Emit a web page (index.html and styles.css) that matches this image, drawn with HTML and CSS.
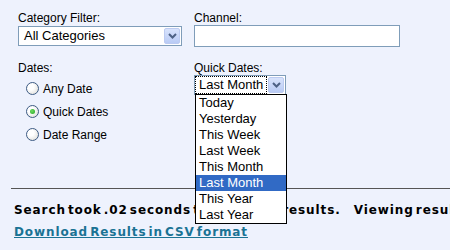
FILE: index.html
```html
<!DOCTYPE html>
<html lang="en">
<head>
    <meta charset="UTF-8">
    <meta name="viewport" content="width=device-width, initial-scale=1.0">
    <title>Search Results</title>
    <link rel="stylesheet" href="styles.css">
</head>
<body>
    <div class="page">
        <div class="filters">
            <div class="field">
                <label class="field-label">Category Filter:</label>
                <div class="xp-select category-select">
                    <span class="xp-value">All Categories</span>
                    <span class="xp-arrow">
                        <svg width="9" height="6" viewBox="0 0 9 6"><path d="M1 1 L4.5 4.5 L8 1" fill="none" stroke="#4d6185" stroke-width="2"/></svg>
                    </span>
                </div>
            </div>

            <div class="field">
                <label class="field-label">Channel:</label>
                <div class="xp-input"></div>
            </div>

            <div class="field">
                <label class="field-label">Dates:</label>
                <ul class="radio-list">
                    <li class="radio-row">
                        <span class="radio"></span>
                        <span>Any Date</span>
                    </li>
                    <li class="radio-row">
                        <span class="radio checked"></span>
                        <span>Quick Dates</span>
                    </li>
                    <li class="radio-row">
                        <span class="radio"></span>
                        <span>Date Range</span>
                    </li>
                </ul>
            </div>

            <div class="field">
                <label class="field-label">Quick Dates:</label>
                <div class="dropdown-wrap">
                    <div class="xp-select quick-select">
                        <span class="xp-value focused">Last Month</span>
                        <span class="xp-arrow">
                            <svg width="9" height="6" viewBox="0 0 9 6"><path d="M1 1 L4.5 4.5 L8 1" fill="none" stroke="#4d6185" stroke-width="2"/></svg>
                        </span>
                    </div>
                    <ul class="dropdown-list">
                        <li>Today</li>
                        <li>Yesterday</li>
                        <li>This Week</li>
                        <li>Last Week</li>
                        <li>This Month</li>
                        <li class="selected">Last Month</li>
                        <li>This Year</li>
                        <li>Last Year</li>
                    </ul>
                </div>
            </div>
        </div>

        <hr class="divider">

        <p class="search-info">Search took .02 seconds to find 1148 results. <span class="viewing">Viewing results 1 - 20</span></p>
        <a class="csv-link" href="#">Download Results in CSV format</a>
    </div>
</body>
</html>
```

FILE: styles.css
```css
* {
    margin: 0;
    padding: 0;
    box-sizing: border-box;
}

html, body {
    overflow: hidden;
}

body {
    font-family: 'Liberation Sans', Arial, sans-serif;
    font-size: 12px;
    background: #eef2fd;
    color: #000;
}

.page {
    padding: 11px 0 0 11px;
}

.filters {
    display: grid;
    grid-template-columns: 176px 206px;
    row-gap: 14px;
    padding-left: 7px;
}

.field-label {
    display: block;
    line-height: 14px;
    height: 14px;
}

/* XP style select box */
.xp-select {
    display: flex;
    align-items: center;
    height: 20px;
    background: #fff;
    border: 1px solid #7f9db9;
    padding: 1px;
    font-size: 13px;
}

.category-select {
    width: 164px;
    margin-top: 1px;
}

.quick-select {
    width: 92px;
}

.xp-value {
    flex: 1;
    line-height: 16px;
    padding-left: 4px;
    white-space: nowrap;
}

.xp-value.focused {
    outline: 1px dotted #000;
    outline-offset: 0;
    padding-left: 3px;
    margin-right: 2px;
}

.xp-arrow {
    width: 16px;
    height: 16px;
    display: flex;
    align-items: center;
    justify-content: center;
    border: 1px solid #bccbf1;
    border-radius: 2px;
    background: linear-gradient(#d8e3fc, #b9cbf5);
}

.xp-input {
    width: 206px;
    height: 22px;
    background: #fff;
    border: 1px solid #7f9db9;
}

.radio-list {
    list-style: none;
    margin-top: 2px;
    padding-left: 8px;
}

.radio-row {
    display: flex;
    align-items: center;
    gap: 4px;
    height: 23px;
}

.radio {
    width: 13px;
    height: 13px;
    border-radius: 50%;
    border: 1px solid #3d5b84;
    background: radial-gradient(circle at 35% 35%, #ffffff 30%, #d9d8d1 100%);
    display: flex;
    align-items: center;
    justify-content: center;
}

.radio.checked::after {
    content: "";
    width: 5px;
    height: 5px;
    border-radius: 50%;
    background: radial-gradient(circle at 40% 40%, #6fdc5f, #21a121);
}

/* open dropdown of the quick dates select */
.dropdown-wrap {
    position: relative;
}

.dropdown-list {
    position: absolute;
    left: 1px;
    top: 19px;
    width: 92px;
    list-style: none;
    background: #fff;
    border: 1px solid #000;
    font-size: 13px;
    z-index: 2;
}

.dropdown-list li {
    height: 16px;
    line-height: 16px;
    padding-left: 3px;
    white-space: nowrap;
}

.dropdown-list li.selected {
    background: #316ac5;
    color: #fff;
}

.divider {
    margin-top: 42px;
    border: none;
    border-top: 1px solid #555;
    height: 1px;
}

.search-info,
.csv-link {
    font-family: 'DejaVu Sans', Verdana, sans-serif;
    font-weight: bold;
    font-size: 12px;
    letter-spacing: 0.9px;
    word-spacing: -3px;
    line-height: 14px;
}

.search-info {
    margin-top: 14px;
    padding-left: 3px;
    white-space: nowrap;
}

.viewing {
    margin-left: 11px;
}

.csv-link {
    display: inline-block;
    margin-top: 8px;
    margin-left: 3px;
    color: #1a7394;
}
```
